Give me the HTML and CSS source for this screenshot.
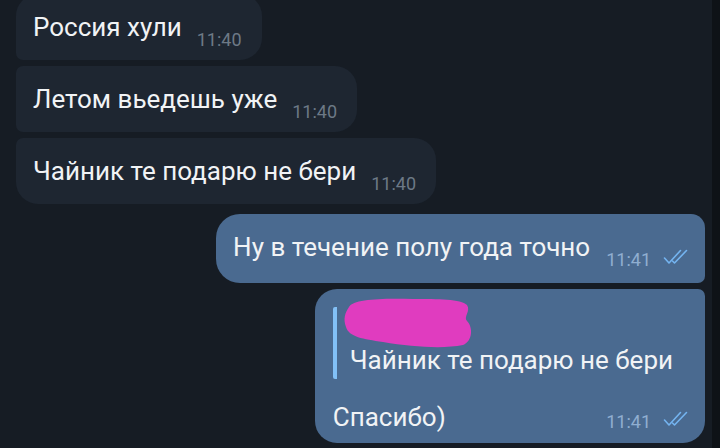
FILE: index.html
```html
<!DOCTYPE html>
<html lang="ru">
<head>
  <meta charset="UTF-8">
  <title>Чат</title>
  <link rel="stylesheet" href="styles.css">
</head>
<body>
  <div class="chat">
    <div class="msg in first">
      <span class="text">Россия хули</span><span class="time">11:40</span>
    </div>
    <div class="msg in middle">
      <span class="text">Летом вьедешь уже</span><span class="time">11:40</span>
    </div>
    <div class="msg in last">
      <span class="text">Чайник те подарю не бери</span><span class="time">11:40</span>
    </div>

    <div class="msg out first gap">
      <span class="text">Ну в течение полу года точно</span><span class="time">11:41</span><svg class="ticks" width="26" height="16" viewBox="0 0 26 16"><polyline points="1.5,9 6,14 17.5,1.5"/><polyline points="9.5,12 11.5,14 23.5,1.5"/></svg>
    </div>
    <div class="msg out last reply">
      <div class="quote">
        <div class="quote-name"></div>
        <div class="quote-text">Чайник те подарю не бери</div>
      </div>
      <div class="row">
        <span class="text">Спасибо)</span>
        <span class="meta"><span class="time">11:41</span><svg class="ticks" width="26" height="16" viewBox="0 0 26 16"><polyline points="1.5,9 6,14 17.5,1.5"/><polyline points="9.5,12 11.5,14 23.5,1.5"/></svg></span>
      </div>
      <svg class="scribble" width="130" height="52" viewBox="0 0 130 52">
        <path d="M6 10 C10 2 40 1 70 2 C95 2 118 2 124 8 C128 14 120 20 124 24 C130 30 130 44 120 48 C100 52 70 50 40 45 C20 42 6 40 3 30 C0 22 2 16 6 10 Z"/>
      </svg>
    </div>
  </div>
  <div class="edge"></div>
</body>
</html>
```

FILE: styles.css
```css
body { margin: 0; height: 448px; overflow: hidden; display: flex; background: #161c24; font-family: Roboto, "Noto Sans", sans-serif; color: #f1f3f5; }
.chat { flex: 1; display: flex; flex-direction: column; align-items: flex-start; gap: 6px; margin-top: -6px; padding: 0 7px 0 16px; }
.edge { width: 8px; background: #0e1217; }

.msg { position: relative; padding: 18px 20px 18px 17px; font-size: 26px; line-height: 30px; white-space: nowrap; }
.msg.in { background: #1e2631; }
.msg.in.first { border-radius: 22px 22px 22px 7px; }
.msg.in.middle { border-radius: 7px 22px 22px 7px; }
.msg.in.last { border-radius: 7px 22px 22px 22px; }

.msg.out { align-self: flex-end; background: #4a6a90; padding-right: 16px; }
.msg.out.first { border-radius: 24px 14px 7px 24px; }
.msg.out.last { border-radius: 22px 7px 22px 22px; }
.gap { margin-top: 4px; }

.time { display: inline-block; margin-left: 15px; font-size: 18px; line-height: 0; vertical-align: -10px; color: #6d7986; }
.out .time { color: #90aed0; margin-left: 16px; }
.ticks { margin-left: 12px; vertical-align: -9px; fill: none; stroke: #74b4f0; stroke-width: 1.6; stroke-linecap: round; stroke-linejoin: round; }

.reply { padding: 18px 16px 11px 18px; }
.quote { border-left: 4px solid #82c0f6; border-radius: 2px; padding-left: 13px; margin-right: 16px; height: 72px; }
.quote-name { height: 34px; }
.quote-text { line-height: 38px; }
.row { margin-top: 23px; display: flex; align-items: baseline; }
.row .text { flex: 1; }
.row .time { vertical-align: -2px; }
.row .ticks { vertical-align: -1px; }
.meta { margin-left: 20px; }

.scribble { position: absolute; left: 28px; top: 8px; }
.scribble path { fill: #e03cbf; }
```
